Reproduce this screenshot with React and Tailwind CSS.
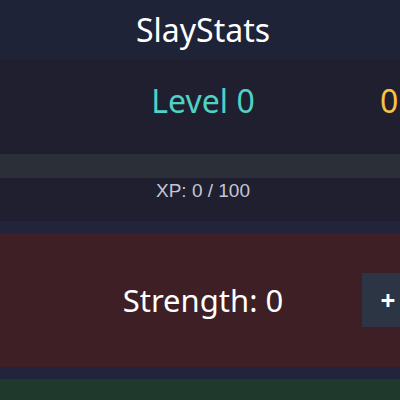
import React, { useState } from "react";

const App = () => {
  const [level] = useState(0);
  const [coins] = useState(0);
  const [xp] = useState(0);
  const [strength] = useState(0);

  return (
    <div className="w-screen h-screen overflow-hidden bg-[#21243a]">
      <div className="w-[414px] font-['Noto_Sans',sans-serif] text-white">
        {/* HEADER */}
        <div className="h-[60px] flex items-center justify-center pr-[8px] bg-[#1f2338]">
          <h1 className="text-[32px] leading-none">SlayStats</h1>
        </div>

        {/* LEVEL PANEL */}
        <div className="h-[161px] bg-[#1f1f2f] flex flex-col">
          <div className="grid grid-cols-[362px_auto] items-center h-[80px] mt-[1px]">
            <div className="pl-[44px] text-center text-[32px] text-[#4fd1c5]">
              Level {level}
            </div>
            <div className="pl-[18px] text-[32px] text-[#f6c343]">{coins}</div>
          </div>

          <div className="h-[24px] mt-[13px] bg-[#2b2f38]" />

          <div className="pr-[8px] text-center text-[19px] leading-[26px] text-[#c3c7d4] font-['Liberation_Sans',sans-serif]">
            XP: {xp} / 100
          </div>
        </div>

        {/* STRENGTH */}
        <div className="mt-[12px] h-[134px] bg-[#3d1f25] grid grid-cols-[362px_52px] items-center">
          <div className="pl-[44px] text-center text-[31px]">Strength: {strength}</div>
          <button className="h-[54px] bg-[#2b3543] text-white text-[26px] font-bold flex items-center justify-center">
            +
          </button>
        </div>

        <div className="mt-[12px] h-[40px] bg-[#1f3a2c]" />
      </div>
    </div>
  );
};

export default App;
